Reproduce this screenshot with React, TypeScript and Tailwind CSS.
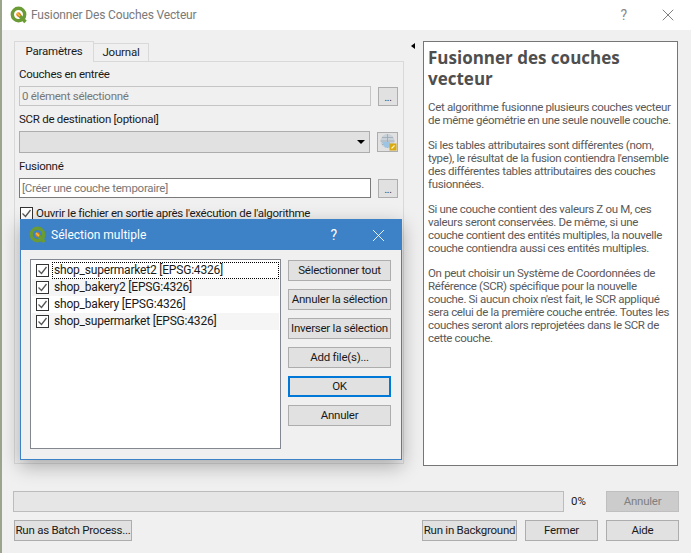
import React from 'react';
import { X } from 'lucide-react';

const font = { fontFamily: 'Roboto, "Noto Sans", sans-serif' };

const QgisLogo = ({ size = 18 }: { size?: number }) => (
  <svg width={size} height={size} viewBox="0 0 18 18" className="shrink-0">
    <circle cx="8.5" cy="8.5" r="6.2" fill="none" stroke="#6a9b35" strokeWidth="3.4" />
    <path d="M9 9l6.5 7" stroke="#6a9b35" strokeWidth="3.4" />
    <circle cx="8.5" cy="8.5" r="2.2" fill="#ee7913" />
    <path d="M7 7l3 3" stroke="#e8c53a" strokeWidth="1.4" />
  </svg>
);

const Check = () => (
  <div className="w-[13px] h-[13px] border border-[#333333] bg-white flex items-center justify-center shrink-0">
    <svg width="11" height="11" viewBox="0 0 11 11">
      <path d="M1.5 5.5l3 3 5-6.5" fill="none" stroke="#555555" strokeWidth="1.3" />
    </svg>
  </div>
);

const GlobeIcon = () => (
  <svg width="18" height="18" viewBox="0 0 18 18">
    <circle cx="8.5" cy="8" r="7" fill="#c9d2d9" />
    <path d="M1.5 8h14M8.5 1v14M3 4.5h11M3 11.5h11" stroke="#98a4ae" strokeWidth="0.7" fill="none" />
    <path d="M3 9h8v5.5H6z" fill="#9cc4e4" />
    <rect x="10.5" y="10.5" width="7" height="7" fill="#d9a90f" />
    <path d="M12.5 15.5l3-3" stroke="#fff3c0" strokeWidth="1.3" />
  </svg>
);

const variants = {
  normal: 'border border-[#adadad] bg-[#e1e1e1] text-[#1a1a1a]',
  focus: 'border-2 border-[#0078d7] bg-[#e1e1e1] text-[#1a1a1a]',
  disabled: 'border border-[#bfbfbf] bg-[#cccccc] text-[#808080]',
};

const Btn = ({ label, className = '', variant = 'normal' }: { label: string; className?: string; variant?: keyof typeof variants }) => (
  <div className={`h-[21px] flex items-center justify-center text-[11.5px] tracking-[-0.25px] whitespace-nowrap ${variants[variant]} ${className}`}>
    {label}
  </div>
);

const DotsBtn = () => (
  <div className="w-[20px] h-[19px] border border-[#adadad] bg-[#e1e1e1] flex items-end justify-center pb-[1px] text-[10px] leading-[12px] text-[#333333]">...</div>
);

const layers = [
  'shop_supermarket2 [EPSG:4326]',
  'shop_bakery2 [EPSG:4326]',
  'shop_bakery [EPSG:4326]',
  'shop_supermarket [EPSG:4326]',
];

const MultiSelect = () => (
  <div className="absolute left-[20px] top-[219px] w-[382px] h-[241px] bg-[#f0f0f0] border border-[#3d81c6] shadow-[0_6px_18px_rgba(0,0,0,0.3)] flex flex-col">
    <div className="h-[30px] bg-[#3d81c6] flex items-center pl-[8px] pr-[12px] text-white shrink-0">
      <QgisLogo size={18} />
      <span className="ml-[4px] text-[12px]">Sélection multiple</span>
      <span className="ml-auto text-[14px] mr-[31px]">?</span>
      <X size={21} strokeWidth={1} />
    </div>
    <div className="flex-1 flex pl-[9px] pr-[10px] pt-[9px] pb-[9px] gap-[7px]">
      <div className="w-[251px] h-[190px] bg-white border border-[#828790] px-[1px] py-[2px] flex flex-col">
        {layers.map((l, i) => (
          <div key={l} className={`h-[17px] flex items-center pl-[4px] text-[12px] tracking-[-0.2px] text-[#1a1a1a] whitespace-nowrap ${i % 2 === 1 ? 'bg-[#f5f5f5]' : 'bg-white'}`}>
            <Check />
            <span className={`ml-[4px] pl-[1px] pr-[2px] leading-[15px] ${i === 0 ? 'outline-1 outline-dotted outline-black w-[225px]' : ''}`}>{l}</span>
          </div>
        ))}
      </div>
      <div className="w-[103px] pt-[1px] flex flex-col gap-[8px]">
        <Btn label="Sélectionner tout" />
        <Btn label="Annuler la sélection" />
        <Btn label="Inverser la sélection" />
        <Btn label="Add file(s)..." />
        <Btn label="OK" variant="focus" />
        <Btn label="Annuler" />
      </div>
    </div>
  </div>
);

const ParamsPane = () => (
  <div className="w-[390px] h-[403px] border border-[#d9d9d9] bg-[#f0f0f0] mt-[-1px] pl-[4px] pr-[5px] pt-[3px] text-[11.5px] tracking-[-0.27px] text-[#1a1a1a]">
    <div className="h-[18px] leading-[18px]">Couches en entrée</div>
    <div className="mt-[3px] flex items-center gap-[7px]">
      <div className="w-[352px] h-[20px] border border-[#c5c5c5] bg-[#f0f0f0] px-[2px] leading-[18px] text-[#777777]">0 élément sélectionné</div>
      <DotsBtn />
    </div>
    <div className="mt-[4px] h-[18px] leading-[18px]">SCR de destination [optional]</div>
    <div className="mt-[3px] flex items-center gap-[7px]">
      <div className="w-[351px] h-[22px] border border-[#adadad] bg-[#e1e1e1] flex items-center justify-end pr-[4px]">
        <div className="w-0 h-0 border-x-[4px] border-x-transparent border-t-[4px] border-t-black" />
      </div>
      <div className="w-[21px] h-[20px] border border-[#adadad] bg-[#e1e1e1] flex items-center justify-center"><GlobeIcon /></div>
    </div>
    <div className="mt-[4px] h-[18px] leading-[18px]">Fusionné</div>
    <div className="mt-[3px] flex items-center gap-[7px]">
      <div className="w-[352px] h-[20px] border border-[#7a7a7a] bg-white px-[2px] leading-[18px] text-[#777777]">[Créer une couche temporaire]</div>
      <DotsBtn />
    </div>
    <div className="mt-[7px] ml-[1px] flex items-center gap-[3px]">
      <Check />
      <span>Ouvrir le fichier en sortie après l'exécution de l'algorithme</span>
    </div>
  </div>
);

const HelpPanel = () => (
  <div className="w-[255px] h-[425px] border border-[#767676] bg-white pl-[4px] pr-[2px] pt-[5px] text-[11.5px] tracking-[-0.33px] leading-[13px] text-[#5a5a5a]">
    <h1 style={{ fontFamily: '"Open Sans", sans-serif' }} className="text-[17px] tracking-normal leading-[21px] font-bold text-[#4f4f4f] mb-[12px]">Fusionner des couches vecteur</h1>
    <p className="mb-[12px]">Cet algorithme fusionne plusieurs couches vecteur de même géométrie en une seule nouvelle couche.</p>
    <p className="mb-[12px]">Si les tables attributaires sont différentes (nom, type), le résultat de la fusion contiendra l'ensemble des différentes tables attributaires des couches fusionnées.</p>
    <p className="mb-[12px]">Si une couche contient des valeurs Z ou M, ces valeurs seront conservées. De même, si une couche contient des entités multiples, la nouvelle couche contiendra aussi ces entités multiples.</p>
    <p>On peut choisir un Système de Coordonnées de Référence (SCR) spécifique pour la nouvelle couche. Si aucun choix n'est fait, le SCR appliqué sera celui de la première couche entrée. Toutes les couches seront alors reprojetées dans le SCR de cette couche.</p>
  </div>
);

export default function App() {
  return (
    <div style={font} className="relative w-[691px] h-[553px] overflow-hidden flex bg-[#f0f0f0]">
      <div className="w-[2px] h-full bg-[#9aa58c] shrink-0" />
      <div className="flex-1 flex flex-col">
        <div className="h-[30px] bg-white flex items-center pl-[8px] pr-[13px] shrink-0">
          <QgisLogo size={18} />
          <span className="ml-[3px] text-[12px] tracking-[-0.15px] text-[#7a7a7a]">Fusionner Des Couches Vecteur</span>
          <span className="ml-auto mr-[31px] text-[14px] text-[#8a8a8a]">?</span>
          <X size={20} strokeWidth={0.9} className="text-[#555555]" />
        </div>
        <div className="flex-1 pl-[12px] pt-[11px] flex flex-col">
          <div className="flex h-[425px]">
            <div className="w-[390px] flex flex-col">
              <div className="flex items-end h-[21px] relative z-10 text-[11.5px] tracking-[-0.2px] text-[#1a1a1a]">
                <div className="w-[80px] h-[21px] border border-b-0 border-[#d9d9d9] bg-[#f0f0f0] flex items-center justify-center">Paramètres</div>
                <div className="w-[55px] h-[19px] border border-l-0 border-[#d9d9d9] bg-[#f0f0f0] flex items-center justify-center">Journal</div>
              </div>
              <ParamsPane />
            </div>
            <div className="w-[19px] pl-[7px] pt-[2px]">
              <div className="w-0 h-0 border-y-[3px] border-y-transparent border-r-[4px] border-r-black" />
            </div>
            <HelpPanel />
          </div>
          <div className="mt-[25px] flex items-center h-[21px] pr-[12px] text-[11.5px] text-[#1a1a1a]">
            <div className="ml-[-1px] w-[551px] h-[21px] border border-[#bcbcbc] bg-[#e6e6e6]" />
            <span className="ml-[7px] w-[35px]">0%</span>
            <Btn label="Annuler" variant="disabled" className="w-[73px]" />
          </div>
          <div className="mt-[8px] flex items-center pr-[12px]">
            <Btn label="Run as Batch Process..." className="w-[118px]" />
            <Btn label="Run in Background" className="w-[95px] ml-auto" />
            <Btn label="Fermer" className="w-[73px] ml-[8px]" />
            <Btn label="Aide" className="w-[73px] ml-[8px]" />
          </div>
        </div>
      </div>
      <div className="w-[1px] h-full bg-[#9aa58c] shrink-0" />
      <MultiSelect />
    </div>
  );
}
